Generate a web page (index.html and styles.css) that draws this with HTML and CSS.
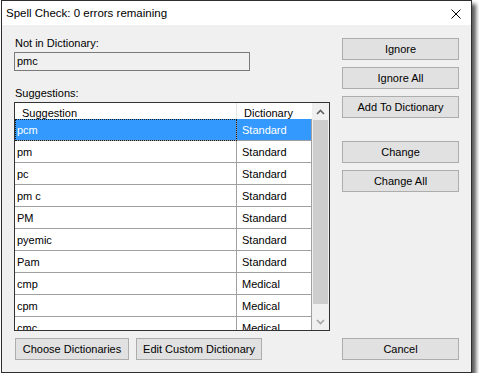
FILE: index.html
```html
<!DOCTYPE html>
<html lang="en">
<head>
    <meta charset="UTF-8">
    <title>Spell Check</title>
    <link rel="stylesheet" href="styles.css">
</head>
<body>
    <div class="window">
        <div class="titlebar">
            <span class="title">Spell Check: 0 errors remaining</span>
            <svg class="close" width="10" height="10" viewBox="0 0 10 10">
                <path d="M0.5 0.5 L9.5 9.5 M9.5 0.5 L0.5 9.5" stroke="#000" stroke-width="1" fill="none"/>
            </svg>
        </div>

        <div class="content">
            <div class="left">
                <label class="label">Not in Dictionary:</label>
                <div class="word-box">pmc</div>

                <label class="label label-suggest">Suggestions:</label>
                <div class="list">
                    <div class="list-body">
                        <div class="list-head">
                            <div class="hcell">Suggestion</div>
                            <div class="hcell">Dictionary</div>
                        </div>
                        <div class="rows">
                            <div class="row selected"><div class="cell focus">pcm</div><div class="cell">Standard</div></div>
                            <div class="row"><div class="cell">pm</div><div class="cell">Standard</div></div>
                            <div class="row"><div class="cell">pc</div><div class="cell">Standard</div></div>
                            <div class="row"><div class="cell">pm c</div><div class="cell">Standard</div></div>
                            <div class="row"><div class="cell">PM</div><div class="cell">Standard</div></div>
                            <div class="row"><div class="cell">pyemic</div><div class="cell">Standard</div></div>
                            <div class="row"><div class="cell">Pam</div><div class="cell">Standard</div></div>
                            <div class="row"><div class="cell">cmp</div><div class="cell">Medical</div></div>
                            <div class="row"><div class="cell">cpm</div><div class="cell">Medical</div></div>
                            <div class="row"><div class="cell">cmc</div><div class="cell">Medical</div></div>
                        </div>
                    </div>
                    <div class="scrollbar">
                        <div class="arrow">
                            <svg width="9" height="6" viewBox="0 0 9 6"><polyline points="1,5 4.5,1.5 8,5" stroke="#606060" stroke-width="1.6" fill="none"/></svg>
                        </div>
                        <div class="thumb"></div>
                        <div class="track"></div>
                        <div class="arrow">
                            <svg width="9" height="6" viewBox="0 0 9 6"><polyline points="1,1 4.5,4.5 8,1" stroke="#a6a6a6" stroke-width="1.6" fill="none"/></svg>
                        </div>
                    </div>
                </div>
            </div>

            <div class="right">
                <button class="btn">Ignore</button>
                <button class="btn">Ignore All</button>
                <button class="btn">Add To Dictionary</button>
                <button class="btn btn-change">Change</button>
                <button class="btn">Change All</button>
            </div>

            <div class="bottom-left">
                <button class="btn btn-choose">Choose Dictionaries</button>
                <button class="btn btn-edit">Edit Custom Dictionary</button>
            </div>
            <div class="bottom-right">
                <button class="btn">Cancel</button>
            </div>
        </div>
    </div>
</body>
</html>
```

FILE: styles.css
```css
body {
    margin: 0;
    background: #fff;
    font-family: "Liberation Sans", Arial, sans-serif;
    font-size: 11px;
    color: #000;
}
.window {
    width: 471px;
    height: 373px;
    margin-left: 1px;
    box-sizing: border-box;
    border: 1px solid #2e2e2e;
    display: flex;
    flex-direction: column;
    box-shadow: 4px 4px 4px rgba(0,0,0,0.65);
}
.titlebar {
    height: 24px;
    background: #fff;
    display: flex;
    align-items: center;
    justify-content: space-between;
    padding-left: 4px;
}
.title {
    font-size: 11.5px;
    line-height: 24px;
}
.close {
    margin-right: 10px;
    margin-top: 2px;
}
.content {
    flex: 1;
    background: #f0f0f0;
    padding: 12px 12px 0 12px;
    display: grid;
    grid-template-columns: 316px 117px;
    column-gap: 12px;
    row-gap: 7px;
    align-content: start;
}
.left {
    display: flex;
    flex-direction: column;
}
.label {
    display: block;
    line-height: 13px;
    height: 13px;
    padding-left: 1px;
}
.word-box {
    margin-top: 2px;
    width: 236px;
    height: 19px;
    box-sizing: border-box;
    border: 1px solid #7a7a7a;
    background: #f0f0f0;
    padding-left: 2px;
    line-height: 17px;
}
.label-suggest {
    margin-top: 16px;
}
.list {
    margin-top: 2px;
    height: 229px;
    box-sizing: border-box;
    border: 1px solid #333;
    background: #fff;
    display: flex;
}
.list-body {
    width: 297px;
    overflow: hidden;
}
.list-head {
    display: grid;
    grid-template-columns: 222px 75px;
    height: 16px;
}
.hcell {
    padding: 4px 0 0 7px;
    line-height: 12px;
    height: 16px;
    box-sizing: border-box;
}
.hcell:first-child {
    border-right: 1px solid #e5e5e5;
}
.row {
    display: grid;
    grid-template-columns: 222px 75px;
}
.cell {
    height: 22px;
    box-sizing: border-box;
    padding: 3px 0 0 2px;
    line-height: 16px;
    border-right: 1px solid #a0a0a0;
    border-bottom: 1px solid #a0a0a0;
    white-space: nowrap;
}
.cell:nth-child(2) {
    padding-left: 5px;
}
.selected .cell {
    background: #3399ff;
    color: #fff;
}
.focus {
    outline: 1px dotted #1a1a1a;
    outline-offset: -1px;
}
.scrollbar {
    width: 17px;
    background: #f0f0f0;
    display: flex;
    flex-direction: column;
    margin-left: auto;
}
.arrow {
    height: 17px;
    display: flex;
    align-items: center;
    justify-content: center;
}
.thumb {
    height: 184px;
    margin: 0 1px;
    background: #cdcdcd;
}
.track {
    flex: 1;
}
.right {
    display: flex;
    flex-direction: column;
    gap: 7px;
    padding-top: 1px;
}
.btn {
    display: block;
    width: 100%;
    height: 22px;
    box-sizing: border-box;
    margin: 0;
    padding: 1px 0 0;
    line-height: 19px;
    background: #e1e1e1;
    border: 1px solid #adadad;
    font-family: "Liberation Sans", Arial, sans-serif;
    font-size: 11px;
    color: #000;
    text-align: center;
    cursor: pointer;
}
.btn-change {
    margin-top: 16px;
}
.bottom-left {
    display: flex;
    gap: 7px;
    padding-left: 1px;
}
.btn-choose {
    width: 114px;
}
.btn-edit {
    width: 126px;
}
```
